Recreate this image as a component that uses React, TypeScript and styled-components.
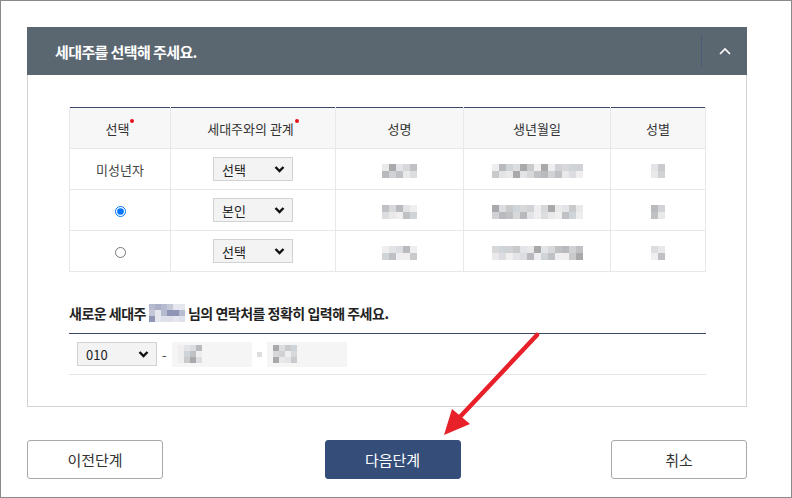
import React from 'react';
import styled, { createGlobalStyle } from 'styled-components';

const GlobalStyle = createGlobalStyle`
  body {
    margin: 0;
    font-family: "Noto Sans CJK KR", "Noto Sans", sans-serif;
    color: #333;
  }
`;

const Frame = styled.div`
  position: relative;
  width: 792px;
  height: 498px;
  box-sizing: border-box;
  border: 1px solid #8a8a8a;
  padding: 26px 44px 0 26px;
  background: #fff;
`;

const Panel = styled.section`
  display: flex;
  flex-direction: column;
`;

const PanelHeader = styled.header`
  display: flex;
  align-items: center;
  height: 48px;
  background-color: #5a6670;
  padding-left: 28px;
`;

const PanelTitle = styled.h2`
  flex: 1;
  margin: 0;
  font-size: 15px;
  font-weight: 700;
  color: #fff;
  letter-spacing: -0.6px;
`;

const Toggle = styled.button`
  display: flex;
  align-items: center;
  justify-content: center;
  width: 46px;
  height: 32px;
  padding: 0;
  border: none;
  border-left: 1px solid #4c5b77;
  background: transparent;
`;

const PanelBody = styled.div`
  height: 332px;
  box-sizing: border-box;
  border: 1px solid #d3d3d3;
  border-top: none;
  padding: 32px 40px 0 41px;
`;

const Table = styled.table`
  width: 636px;
  border-collapse: collapse;
  border-top: 1px solid #3a4868;
  table-layout: fixed;
`;

const Th = styled.th<{ $w: number }>`
  width: ${(p) => p.$w}px;
  height: 40px;
  background: #f7f7f7;
  border: 1px solid #e8e8e8;
  border-top: none;
  font-size: 13px;
  font-weight: 400;
  color: #333;
  padding: 0;
`;

const Td = styled.td`
  height: 40px;
  border: 1px solid #e8e8e8;
  text-align: center;
  font-size: 13px;
  color: #444;
  padding: 0;
`;

const Required = styled.span`
  display: inline-block;
  width: 4px;
  height: 4px;
  border-radius: 50%;
  background: #e3141b;
  vertical-align: top;
  margin: 0 0 0 1px;
`;

const SelectBox = styled.div<{ $w: number }>`
  display: inline-flex;
  align-items: center;
  justify-content: space-between;
  box-sizing: border-box;
  width: ${(p) => p.$w}px;
  height: 24px;
  padding: 0 7px 0 8px;
  background: #f3f3f3;
  border: 1px solid #d2d2d2;
  font-size: 13px;
  color: #222;
  vertical-align: middle;
`;

const Radio = styled.input`
  width: 11px;
  height: 11px;
  margin: 0;
  vertical-align: middle;
`;

const Mosaic = styled.span<{ $cols: number; $cell: number }>`
  display: inline-grid;
  grid-template-columns: repeat(${(p) => p.$cols}, ${(p) => p.$cell}px);
  grid-auto-rows: ${(p) => p.$cell}px;
  vertical-align: middle;
`;

const SubTitle = styled.h3`
  display: flex;
  align-items: center;
  gap: 3px;
  margin: 31px 0 0;
  padding-bottom: 10px;
  border-bottom: 1px solid #3a4868;
  font-size: 14px;
  font-weight: 700;
  color: #222;
  letter-spacing: -0.5px;
`;

const PhoneRow = styled.div`
  display: flex;
  align-items: center;
  height: 40px;
  padding-left: 8px;
  border-bottom: 1px solid #e5e5e5;
`;

const Dash = styled.span`
  margin: 0 5px;
  font-size: 13px;
  color: #444;
`;

const Dot = styled.span`
  width: 5px;
  height: 5px;
  margin: 0 5px;
  background: #dedede;
`;

const PhoneInput = styled.div`
  display: flex;
  align-items: center;
  box-sizing: border-box;
  width: 80px;
  height: 25px;
  padding-left: 6px;
  background: #f5f5f5;
`;

const ButtonRow = styled.div`
  display: flex;
  justify-content: space-between;
  margin-top: 33px;
`;

const Button = styled.button<{ $primary?: boolean }>`
  width: 136px;
  height: 39px;
  margin-left: ${(p) => (p.$primary ? '11px' : '0')};
  border-radius: 3px;
  border: 1px solid ${(p) => (p.$primary ? '#344d79' : '#a9a9a9')};
  background: ${(p) => (p.$primary ? '#344d79' : '#fff')};
  color: ${(p) => (p.$primary ? '#fff' : '#333')};
  font-family: inherit;
  font-size: 15px;
`;

const Arrow = styled.svg`
  position: absolute;
  left: 0;
  top: 0;
  pointer-events: none;
`;

const palette = ['#e9e9ea', '#d7d8da', '#c9cacc', '#eeeef0', '#dcdde0', '#bfc1c4', '#e2e4e8', '#d0d2d6', '#a9a8ab', '#cfd4d8', '#f0eeee', '#b8babd'];
const bluePalette = ['#c5c8d6', '#aab0c8', '#dfe1ea', '#8f96b5', '#e6e7ee', '#b6bbd0'];

const Pixels = ({ cols, rows, cell, seed, colors = palette }: { cols: number; rows: number; cell: number; seed: number; colors?: string[] }) => {
  const cells = Array.from({ length: cols * rows }, (_, i) => colors[(i * 7 + seed * 5 + ((i * i) % 5)) % colors.length]);
  return (
    <Mosaic $cols={cols} $cell={cell}>
      {cells.map((c, i) => (
        <span key={i} style={{ background: c }} />
      ))}
    </Mosaic>
  );
};

const Chevron = () => (
  <svg width="11" height="8" viewBox="0 0 11 8">
    <path d="M1.5 2 L5.5 6 L9.5 2" fill="none" stroke="#111" strokeWidth="2.4" />
  </svg>
);

const rows = [
  { pick: 'text', relation: '선택' },
  { pick: 'checked', relation: '본인' },
  { pick: 'empty', relation: '선택' },
];

const App = () => {
  return (
    <>
      <GlobalStyle />
      <Frame>
        <Panel>
          <PanelHeader>
            <PanelTitle>세대주를 선택해 주세요.</PanelTitle>
            <Toggle aria-label="접기">
              <svg width="12" height="8" viewBox="0 0 12 8">
                <path d="M1 7 L6 2 L11 7" fill="none" stroke="#fff" strokeWidth="1.6" />
              </svg>
            </Toggle>
          </PanelHeader>
          <PanelBody>
            <Table>
              <thead>
                <tr>
                  <Th $w={100}>선택<Required /></Th>
                  <Th $w={164}>세대주와의 관계<Required /></Th>
                  <Th $w={127}>성명</Th>
                  <Th $w={146}>생년월일</Th>
                  <Th $w={94}>성별</Th>
                </tr>
              </thead>
              <tbody>
                {rows.map((r, i) => (
                  <tr key={i}>
                    <Td>
                      {r.pick === 'text' ? '미성년자' : <Radio type="radio" name="owner" defaultChecked={r.pick === 'checked'} />}
                    </Td>
                    <Td>
                      <SelectBox $w={80}>
                        {r.relation}
                        <Chevron />
                      </SelectBox>
                    </Td>
                    <Td>
                      <Pixels cols={5} rows={2} cell={7} seed={i} />
                    </Td>
                    <Td>
                      <Pixels cols={13} rows={2} cell={7} seed={i + 3} />
                    </Td>
                    <Td>
                      <Pixels cols={2} rows={2} cell={7} seed={i + 6} />
                    </Td>
                  </tr>
                ))}
              </tbody>
            </Table>

            <SubTitle>
              새로운 세대주 <Pixels cols={6} rows={3} cell={6} seed={1} colors={bluePalette} /> 님의 연락처를 정확히 입력해 주세요.
            </SubTitle>
            <PhoneRow>
              <SelectBox $w={80}>
                010
                <Chevron />
              </SelectBox>
              <Dash>-</Dash>
              <PhoneInput>
                <Pixels cols={4} rows={3} cell={6} seed={2} />
              </PhoneInput>
              <Dot />
              <PhoneInput>
                <Pixels cols={4} rows={3} cell={6} seed={4} />
              </PhoneInput>
            </PhoneRow>
          </PanelBody>
        </Panel>

        <ButtonRow>
          <Button>이전단계</Button>
          <Button $primary>다음단계</Button>
          <Button>취소</Button>
        </ButtonRow>

        <Arrow width="792" height="498" viewBox="0 0 792 498">
          <line x1="536" y1="334" x2="457" y2="418" stroke="#e8202a" strokeWidth="4.5" strokeLinecap="round" />
          <polygon points="443,434 451,408 469,423" fill="#e8202a" />
        </Arrow>
      </Frame>
    </>
  );
};

export default App;
